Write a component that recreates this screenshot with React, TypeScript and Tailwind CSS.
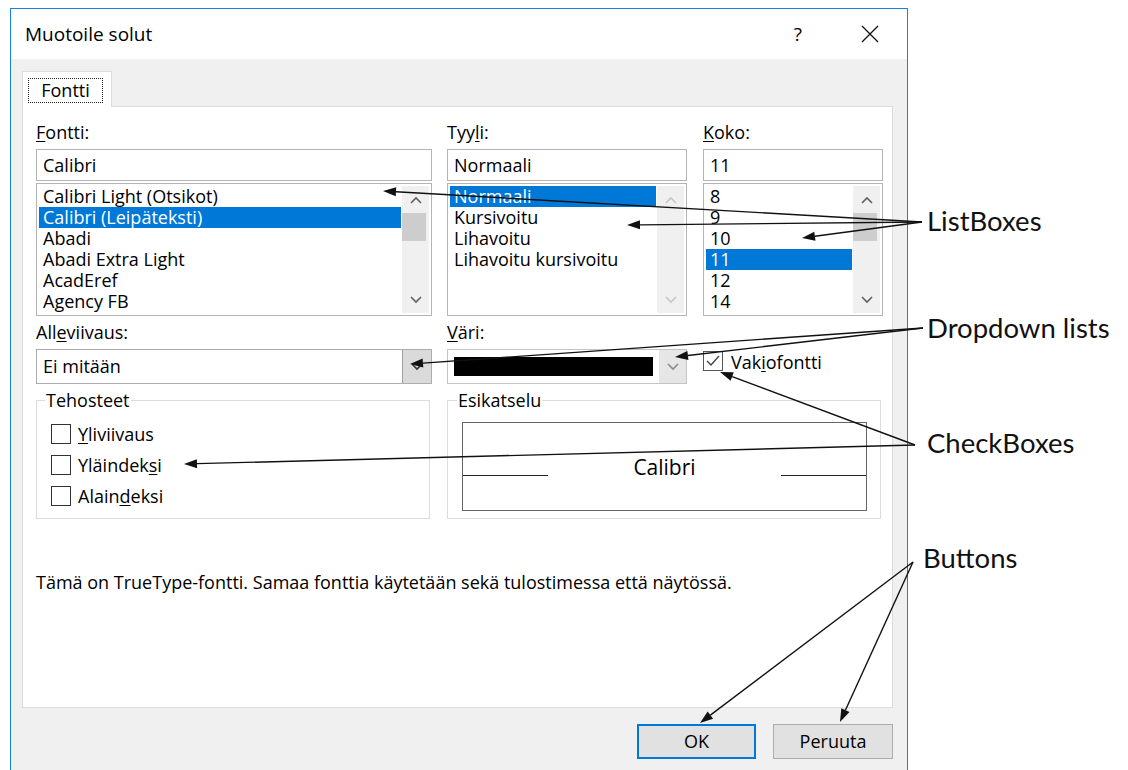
import React from "react";

type Pt = [number, number];

const FONT_NAMES = [
  "Calibri Light (Otsikot)",
  "Calibri (Leipäteksti)",
  "Abadi",
  "Abadi Extra Light",
  "AcadEref",
  "Agency FB",
];
const STYLE_NAMES = ["Normaali", "Kursivoitu", "Lihavoitu", "Lihavoitu kursivoitu"];
const SIZE_NAMES = ["8", "9", "10", "11", "12", "14"];

// callout arrows: one origin next to each label, several targets
const CALLOUTS: { from: Pt; to: Pt[] }[] = [
  { from: [922, 222], to: [[383, 191], [627, 225], [802, 238]] },
  { from: [923, 328], to: [[410, 364], [675, 357]] },
  { from: [915, 445], to: [[720, 372], [184, 464]] },
  { from: [913, 562], to: [[700, 723], [840, 722]] },
];

function Chevron({ up, color }: { up?: boolean; color: string }) {
  return (
    <svg width="12" height="8" viewBox="0 0 12 8">
      <path
        d={up ? "M1 7 L6 2 L11 7" : "M1 1 L6 6 L11 1"}
        fill="none"
        stroke={color}
        strokeWidth="1.6"
      />
    </svg>
  );
}

function ScrollBar({ disabled }: { disabled?: boolean }) {
  const c = disabled ? "#c6c6c6" : "#606060";
  return (
    <div className="flex w-[27px] shrink-0 flex-col bg-[#f0f0f0]">
      <div className="flex h-[27px] items-center justify-center">
        <Chevron up color={c} />
      </div>
      {!disabled && <div className="mr-[3px] h-[28px] bg-[#cdcdcd]" />}
      <div className="flex-1" />
      <div className="flex h-[26px] items-center justify-center">
        <Chevron color={c} />
      </div>
    </div>
  );
}

function ListBox({
  items,
  selected,
  disabledScroll,
}: {
  items: string[];
  selected: number;
  disabledScroll?: boolean;
}) {
  return (
    <div className="mt-[2px] flex h-[133px] border border-[#b4b4b4] bg-white p-[2px]">
      <div className="min-w-0 flex-1 pr-[1px]">
        {items.map((it, i) => (
          <div
            key={it}
            className={`h-[21px] whitespace-nowrap pl-[4px] leading-[21px] ${
              i === selected ? "bg-[#0078d7] text-white" : ""
            }`}
          >
            {it}
          </div>
        ))}
      </div>
      <ScrollBar disabled={disabledScroll} />
    </div>
  );
}

function TextBox({ value }: { value: string }) {
  return (
    <div className="flex h-[32px] items-center border border-[#b4b4b4] bg-white pl-[6px]">
      {value}
    </div>
  );
}

function Label({ pre, key_, post }: { pre: string; key_: string; post: string }) {
  return (
    <div className="h-[21px] leading-[21px]">
      {pre}
      <span className="underline underline-offset-2">{key_}</span>
      {post}
    </div>
  );
}

function CheckBox({ checked }: { checked?: boolean }) {
  return (
    <span
      className={`flex h-[20px] w-[20px] shrink-0 items-center justify-center bg-white ${
        checked ? "border border-[#555]" : "border border-[#333]"
      }`}
    >
      {checked && (
        <svg width="16" height="14" viewBox="0 0 16 14">
          <path d="M2 7 L6 11 L14 2" fill="none" stroke="#444" strokeWidth="1.4" />
        </svg>
      )}
    </span>
  );
}

function Arrow({ from, to }: { from: Pt; to: Pt }) {
  const [x1, y1] = from;
  const [x2, y2] = to;
  const a = Math.atan2(y2 - y1, x2 - x1);
  const len = 13;
  const half = 4.5;
  const bx = x2 - len * Math.cos(a);
  const by = y2 - len * Math.sin(a);
  const p1 = `${bx + half * Math.sin(a)},${by - half * Math.cos(a)}`;
  const p2 = `${bx - half * Math.sin(a)},${by + half * Math.cos(a)}`;
  return (
    <g>
      <line x1={x1} y1={y1} x2={bx} y2={by} stroke="#111" strokeWidth="1.4" />
      <polygon points={`${x2},${y2} ${p1} ${p2}`} fill="#111" />
    </g>
  );
}

export default function App() {
  return (
    <div className="relative flex h-[770px] w-[1128px] overflow-hidden bg-white font-['Open_Sans','Noto_Sans',sans-serif] text-[18px] text-black">
      {/* dialog window */}
      <div className="ml-[10px] mt-[8px] flex h-[770px] w-[898px] shrink-0 flex-col border-x border-t border-[#1883d7]">
        <div className="flex h-[50px] items-center bg-white pl-[14px]">
          <span className="text-[19px]">Muotoile solut</span>
          <span className="ml-auto text-[19px]">?</span>
          <svg className="ml-[59px] mr-[28px]" width="18" height="18" viewBox="0 0 18 18">
            <path d="M1 1 L17 17 M17 1 L1 17" stroke="#111" strokeWidth="1.3" />
          </svg>
        </div>

        <div className="flex flex-1 flex-col bg-[#f0f0f0] pl-[11px] pr-[14px] pt-[12px]">
          {/* tab strip */}
          <div className="relative z-10 -mb-px flex h-[36px] w-[90px] border-x border-t border-[#dcdcdc] bg-white">
            <div className="ml-[5px] mt-[6px] flex h-[25px] w-[75px] items-center justify-center border border-dotted border-[#222]">
              Fontti
            </div>
          </div>

          {/* tab page */}
          <div className="flex h-[602px] flex-col border border-[#dcdcdc] bg-white pl-[13px] pt-[15px]">
            <div className="flex gap-[15px]">
              <div className="w-[396px]">
                <Label pre="" key_="F" post="ontti:" />
                <div className="mt-[6px]">
                  <TextBox value="Calibri" />
                </div>
                <ListBox items={FONT_NAMES} selected={1} />
              </div>
              <div className="w-[240px]">
                <Label pre="Tyy" key_="l" post="i:" />
                <div className="mt-[6px]">
                  <TextBox value="Normaali" />
                </div>
                <ListBox items={STYLE_NAMES} selected={0} disabledScroll />
              </div>
              <div className="ml-[1px] w-[180px]">
                <Label pre="" key_="K" post="oko:" />
                <div className="mt-[6px]">
                  <TextBox value="11" />
                </div>
                <ListBox items={SIZE_NAMES} selected={3} />
              </div>
            </div>

            {/* underline / colour row */}
            <div className="mt-[6px] flex gap-[15px]">
              <div className="w-[396px]">
                <Label pre="All" key_="e" post="viivaus:" />
                <div className="mt-[6px] flex h-[35px] border border-[#adadad] bg-white">
                  <div className="flex flex-1 items-center pl-[6px]">Ei mitään</div>
                  <div className="flex w-[29px] items-center justify-center border-l border-[#a0a0a0] bg-[#dadada]">
                    <Chevron color="#333" />
                  </div>
                </div>
              </div>
              <div className="w-[240px]">
                <Label pre="" key_="V" post="äri:" />
                <div className="mt-[6px] flex h-[35px] border border-[#c4c4c4] bg-white">
                  <div className="flex flex-1 items-center pl-[6px]">
                    <div className="h-[19px] w-[199px] bg-black" />
                  </div>
                  <div className="flex w-[27px] items-center justify-center bg-[#e6e6e6]">
                    <Chevron color="#8a8a8a" />
                  </div>
                </div>
              </div>
              <div className="ml-[1px] flex w-[180px] items-end">
                <div className="mb-[8px] flex items-center gap-[8px]">
                  <CheckBox checked />
                  <span className="pt-[3px]">
                    Vak<span className="underline underline-offset-2">i</span>ofontti
                  </span>
                </div>
              </div>
            </div>

            {/* effects / preview */}
            <div className="mt-[6px] flex gap-[17px]">
              <fieldset className="h-[129px] w-[394px] border border-[#dcdcdc]">
                <legend className="ml-[8px] px-[1px] leading-[20px]">Tehosteet</legend>
                <div className="mt-[14px] flex flex-col gap-[11px] pl-[14px]">
                  <div className="flex h-[20px] items-center gap-[7px]">
                    <CheckBox />
                    <span>
                      <span className="underline underline-offset-2">Y</span>liviivaus
                    </span>
                  </div>
                  <div className="flex h-[20px] items-center gap-[7px]">
                    <CheckBox />
                    <span>
                      Yläindek<span className="underline underline-offset-2">s</span>i
                    </span>
                  </div>
                  <div className="flex h-[20px] items-center gap-[7px]">
                    <CheckBox />
                    <span>
                      Alain<span className="underline underline-offset-2">d</span>eksi
                    </span>
                  </div>
                </div>
              </fieldset>
              <fieldset className="h-[129px] w-[434px] border border-[#dcdcdc]">
                <legend className="ml-[9px] px-[1px] leading-[20px]">Esikatselu</legend>
                <div className="ml-[14px] mt-[12px] flex h-[89px] w-[405px] border border-[#666]">
                  <div className="h-[53px] w-[85px] border-b border-[#222]" />
                  <div className="flex flex-1 justify-center pt-[30px] text-[21px] leading-[28px]">
                    Calibri
                  </div>
                  <div className="h-[53px] w-[85px] border-b border-[#222]" />
                </div>
              </fieldset>
            </div>

            <div className="mt-[53px] leading-[21px]">
              Tämä on TrueType-fontti. Samaa fonttia käytetään sekä tulostimessa että näytössä.
            </div>
          </div>

          {/* dialog buttons */}
          <div className="mt-[16px] flex justify-end gap-[17px]">
            <button className="h-[35px] w-[119px] border-2 border-[#0078d7] bg-[#e1e1e1]">OK</button>
            <button className="h-[35px] w-[120px] border border-[#adadad] bg-[#e1e1e1]">Peruuta</button>
          </div>
        </div>
      </div>

      {/* callout labels */}
      <div className="ml-[19px] flex flex-col pt-[204px] font-['Lato',sans-serif] text-[27.5px] leading-[34px] text-[#111]">
        <div>ListBoxes</div>
        <div className="mt-[73px]">Dropdown lists</div>
        <div className="mt-[81px]">CheckBoxes</div>
        <div className="-ml-[4px] mt-[81px]">Buttons</div>
      </div>

      <svg className="pointer-events-none absolute inset-0" width="1128" height="770">
        {CALLOUTS.map((c, i) =>
          c.to.map((t, j) => <Arrow key={`${i}-${j}`} from={c.from} to={t} />)
        )}
      </svg>
    </div>
  );
}
